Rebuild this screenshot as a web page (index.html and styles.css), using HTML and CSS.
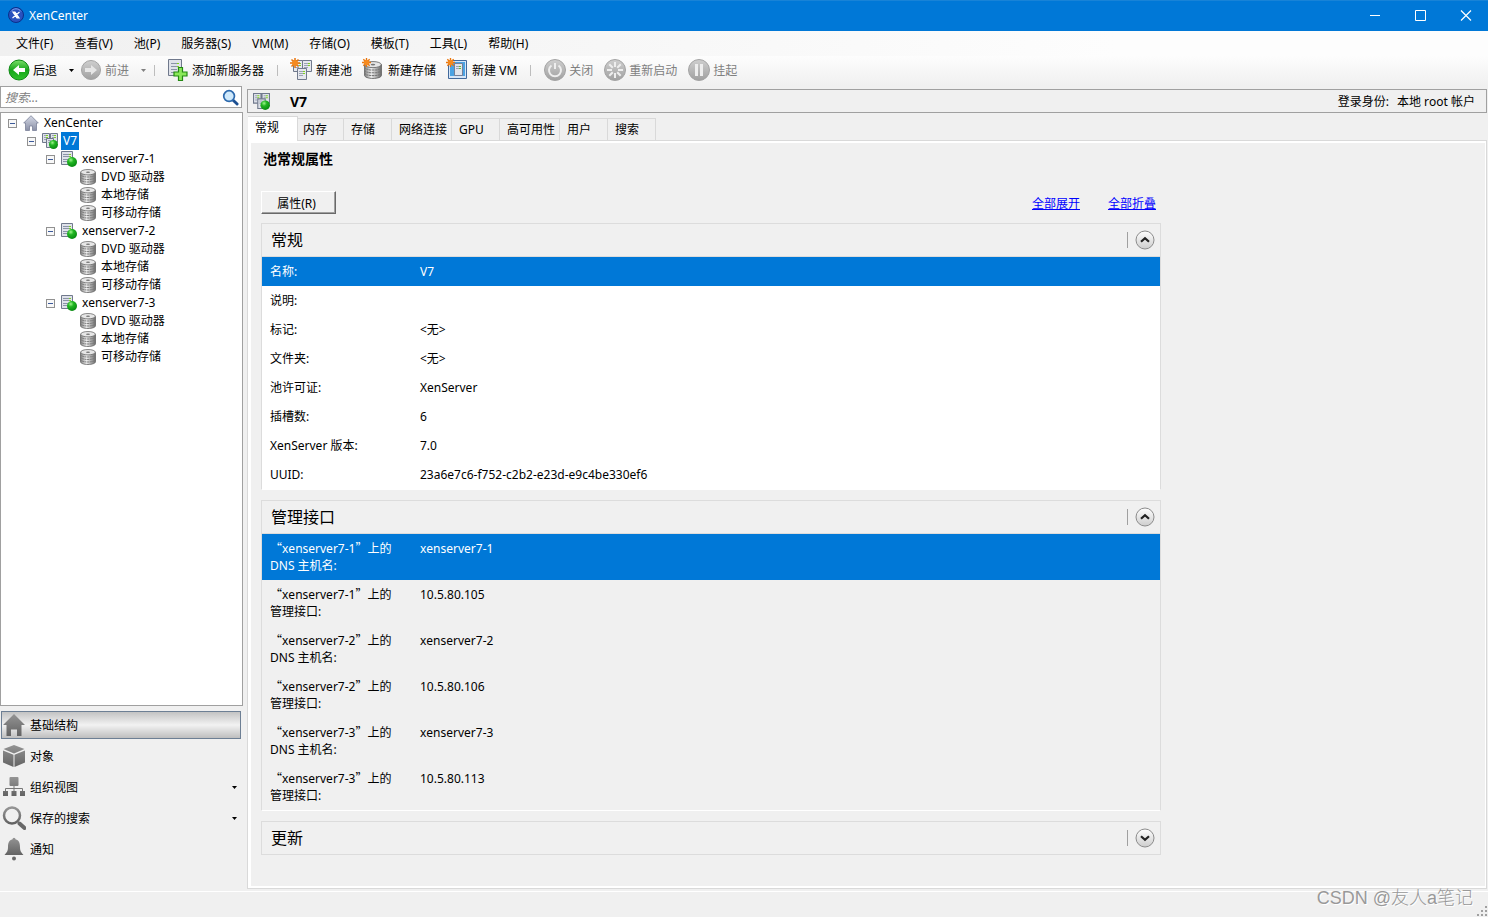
FILE: index.html
```html
<!DOCTYPE html>
<html lang="zh-CN">
<head>
<meta charset="utf-8">
<title>XenCenter</title>
<link rel="stylesheet" href="styles.css">
</head>
<body>
<svg class="sprite" aria-hidden="true">
  <defs>
    <linearGradient id="g-green" x1="0" y1="0" x2="0" y2="1"><stop offset="0" stop-color="#7be06a"/><stop offset=".5" stop-color="#17a51a"/><stop offset="1" stop-color="#2fc42c"/></linearGradient>
    <linearGradient id="g-gray" x1="0" y1="0" x2="0" y2="1"><stop offset="0" stop-color="#cfcfcf"/><stop offset="1" stop-color="#a0a0a0"/></linearGradient>
    <linearGradient id="g-nav" x1="0" y1="0" x2="0" y2="1"><stop offset="0" stop-color="#949494"/><stop offset="1" stop-color="#636363"/></linearGradient>
    <linearGradient id="g-disk" x1="0" y1="0" x2="1" y2="0"><stop offset="0" stop-color="#808080"/><stop offset=".4" stop-color="#efefef"/><stop offset="1" stop-color="#6a6a6a"/></linearGradient>
    <linearGradient id="g-house" x1="0" y1="0" x2="0" y2="1"><stop offset="0" stop-color="#d5d9e6"/><stop offset="1" stop-color="#8a90a6"/></linearGradient>
    <linearGradient id="g-round" x1="0" y1="0" x2="0" y2="1"><stop offset="0" stop-color="#fff"/><stop offset="1" stop-color="#cdcdcd"/></linearGradient>
    <radialGradient id="g-ball" cx=".38" cy=".3" r=".7"><stop offset="0" stop-color="#9cf58a"/><stop offset=".4" stop-color="#21b522"/><stop offset="1" stop-color="#078a10"/></radialGradient>
    <symbol id="i-star" viewBox="0 0 10 10"><path d="M5 0v10M0 5h10M1.500 1.500l7 7M8.500 1.500l-7 7" stroke="#e8740c" stroke-width="1.500"/><circle cx="5" cy="5" r="3" fill="#f58a1f"/></symbol>
    <symbol id="i-rack" viewBox="0 0 10 12"><path d="M.5.5h9v11h-9z" fill="#e6e8ee" stroke="#70798c"/><path d="M2 3.500h4M2 5.500h4M2 7.500h4" stroke="#9aa2b4"/><path d="M6 3.500h2M6 5.500h2" stroke="#7ed321"/></symbol>
    <symbol id="i-pool" viewBox="0 0 16 16"><path d="M.5.5h7v9h-7zM8.500.5h7v9h-7z" fill="#dfe2ea" stroke="#70798c"/><path d="M2 2.500h2M2 4.500h2M10 2.500h2M10 4.500h2M2 6.500h2" stroke="#9aa2b4"/><path d="M4 2.500h2M4 4.500h2M12 2.500h2M12 4.500h2" stroke="#7ed321"/><path d="M4.500 5.500h7v9h-7z" fill="#dfe2ea" stroke="#70798c"/><path d="M6 7.500h3M6 9.500h3" stroke="#9aa2b4"/><circle cx="11.500" cy="11.500" r="4.500" fill="url(#g-ball)"/></symbol>
    <symbol id="i-server" viewBox="0 0 16 16"><path d="M.5.5h11v13h-11z" fill="#dfe2ea" stroke="#70798c"/><path d="M2 3.500h6M2 5.500h6M2 8.500h5M2 10.500h4" stroke="#8a93a8"/><path d="M8 3.500h2M8 5.500h2" stroke="#7ed321"/><circle cx="11" cy="11" r="5" fill="url(#g-ball)"/></symbol>
    <symbol id="i-disk" viewBox="0 0 16 16"><path d="M.5 3.200v9.600c0 1.500 3.400 2.700 7.500 2.700s7.500-1.200 7.500-2.700V3.200z" fill="url(#g-disk)" stroke="#666" stroke-width=".8"/><path d="M.5 5.500c0 1.600 3.400 2.500 7.500 2.500s7.500-.9 7.500-2.500M.5 8C.5 9.600 3.900 10.500 8 10.500s7.500-.9 7.500-2.500M.5 10.500C.5 12.100 3.900 13 8 13s7.500-.9 7.500-2.500" fill="none" stroke="#777" stroke-width=".9" stroke-dasharray="2 .5"/><ellipse cx="8" cy="3.200" rx="7.300" ry="2.700" fill="#e6e6e6" stroke="#6d6d6d" stroke-width=".8"/><ellipse cx="8" cy="3.200" rx="2" ry=".8" fill="#777"/></symbol>
    <symbol id="i-home" viewBox="0 0 16 16"><path d="M8 .7L15.300 8H13.500v7.500h-4v-4.500h-3v4.500h-4V8H.7z" fill="url(#g-house)" stroke="#7b8299" stroke-width=".8"/></symbol>
    <symbol id="i-up" viewBox="0 0 20 20"><circle cx="10" cy="10" r="9" fill="url(#g-round)" stroke="#8c8c8c"/><path d="M6 11.800l4-3.600 4 3.600" fill="none" stroke="#222" stroke-width="2.200"/></symbol>
    <symbol id="i-down" viewBox="0 0 20 20"><circle cx="10" cy="10" r="9" fill="url(#g-round)" stroke="#8c8c8c"/><path d="M6 8.200l4 3.600 4-3.600" fill="none" stroke="#222" stroke-width="2.200"/></symbol>
    <symbol id="i-drop" viewBox="0 0 5 3"><path d="M0 0h5L2.500 3z" fill="currentColor"/></symbol>
  </defs>
</svg>
<div class="app">
  <header class="titlebar">
    <svg class="logo" viewBox="0 0 16 16"><circle cx="8" cy="8" r="7.500" fill="#2a52be" stroke="#0b2f8a"/><path d="M3 4.500A6 6 0 0 1 13 4.500" fill="none" stroke="#7ea2ee"/><path d="M5 5.200h2l4 5.600H9zM11.500 5L4.500 11" fill="#fff" stroke="#fff" stroke-width="1.200"/></svg>
    <span class="app-name">XenCenter</span>
    <button class="win" aria-label="最小化"><svg viewBox="0 0 12 12"><path d="M0 6.500h10" stroke="#fff"/></svg></button>
    <button class="win" aria-label="最大化"><svg viewBox="0 0 12 12"><path d="M.5 1.500h10v10h-10z" fill="none" stroke="#fff"/></svg></button>
    <button class="win" aria-label="关闭窗口"><svg viewBox="0 0 12 12"><path d="M1 1.500l10 10M11 1.500L1 11.500" stroke="#fff" stroke-width="1.200"/></svg></button>
  </header>
  <nav class="menubar">
    <button>文件(F)</button><button>查看(V)</button><button>池(P)</button><button>服务器(S)</button><button>VM(M)</button><button>存储(O)</button><button>模板(T)</button><button>工具(L)</button><button>帮助(H)</button>
  </nav>
  <div class="toolbar">
    <button class="tool"><svg viewBox="0 0 24 24"><circle cx="12" cy="12" r="10" fill="url(#g-green)" stroke="#0e8a14"/><path d="M6 12l6-5v3h6v4h-6v3z" fill="#fff"/></svg>后退</button>
    <button class="drop" aria-label="后退历史"><svg><use href="#i-drop"/></svg></button>
    <button class="tool tool-next" disabled><svg viewBox="0 0 24 24"><circle cx="12" cy="12" r="9.500" fill="url(#g-gray)" stroke="#a4a4a4"/><path d="M18 12l-6-5v3H6v4h6v3z" fill="#e6e6e6"/></svg>前进</button>
    <button class="drop" disabled aria-label="前进历史"><svg><use href="#i-drop"/></svg></button>
    <span class="sep sep-tight"></span>
    <button class="tool"><svg viewBox="0 0 24 24"><path d="M2.500 1.500h13v16h-13z" fill="#dfe2ea" stroke="#70798c"/><path d="M5 5.500h8M5 8.500h8M5 11.500h6M5 14.500h4" stroke="#8a93a8"/><path d="M11 5.500h2M11 8.500h2" stroke="#7ed321"/><path d="M12.500 9.500h4v4.500h4.500v4h-4.500v4.500h-4v-4.500H8v-4h4.500z" fill="#8be85a" stroke="#258a14" stroke-width="1.200"/></svg>添加新服务器</button>
    <span class="sep"></span>
    <button class="tool"><svg viewBox="0 0 24 24"><use href="#i-rack" x="3" y="2" width="10" height="12"/><use href="#i-rack" x="12" y="2" width="10" height="12"/><use href="#i-rack" x="7" y="10" width="10" height="12"/><use href="#i-star" x="0" y="0" width="10" height="10"/></svg>新建池</button>
    <button class="tool"><svg viewBox="0 0 24 24"><use href="#i-disk" x="2" y="3" width="18" height="18"/><use href="#i-star" x="0" y="0" width="9" height="9"/></svg>新建存储</button>
    <button class="tool"><svg viewBox="0 0 24 24"><path d="M2.500 2.500h18v18h-18z" fill="#d6e6f7" stroke="#41699c"/><path d="M4 4h15v14H4z" fill="#4ba3e3"/><path d="M8.500 5.500h8v12h-8z" fill="#e2e5ec" stroke="#75809a"/><path d="M10 8.500h5M10 10.500h5" stroke="#9aa2b4"/><path d="M13 8.500h2M13 10.500h2" stroke="#6cbf2c"/><use href="#i-star" x="0" y="0" width="9" height="9"/></svg>新建 VM</button>
    <span class="sep"></span>
    <button class="tool" disabled><svg viewBox="0 0 24 24"><circle cx="12" cy="12" r="10.500" fill="url(#g-gray)" stroke="#a4a4a4"/><path d="M8.500 7.500a6 6 0 1 0 7 0M12 5v6" fill="none" stroke="#eee" stroke-width="2"/></svg>关闭</button>
    <button class="tool" disabled><svg viewBox="0 0 24 24"><circle cx="12" cy="12" r="10.500" fill="url(#g-gray)" stroke="#a4a4a4"/><path d="M12 4v5M12 15v5M4 12h5M15 12h5M6.300 6.300l3.500 3.500M14.200 14.200l3.500 3.500M6.300 17.700l3.500-3.500M14.200 9.800l3.500-3.500" stroke="#eee" stroke-width="2"/></svg>重新启动</button>
    <button class="tool" disabled><svg viewBox="0 0 24 24"><circle cx="12" cy="12" r="10.500" fill="url(#g-gray)" stroke="#a4a4a4"/><path d="M9.500 6v12M14.500 6v12" stroke="#eee" stroke-width="3"/></svg>挂起</button>
  </div>
  <div class="main">
    <aside class="side">
      <div class="search">
        <input type="text" placeholder="搜索..." aria-label="搜索">
        <svg viewBox="0 0 18 18"><path d="M11 11l5 5" stroke="#1c4f91" stroke-width="3" stroke-linecap="round"/><circle cx="7.500" cy="7.500" r="5.700" fill="#cfe9fb" stroke="#2c69ad" stroke-width="1.800"/></svg>
      </div>
      <div class="tree">
        <ul>
          <li><div class="node"><button class="exp" aria-label="折叠"></button><svg><use href="#i-home"/></svg><span>XenCenter</span></div>
            <ul>
              <li><div class="node"><button class="exp" aria-label="折叠"></button><svg><use href="#i-pool"/></svg><span class="picked">V7</span></div>
                <ul>
                  <li><div class="node"><button class="exp" aria-label="折叠"></button><svg><use href="#i-server"/></svg><span>xenserver7-1</span></div>
                    <ul>
                      <li><div class="node leaf"><svg><use href="#i-disk"/></svg><span>DVD 驱动器</span></div></li>
                      <li><div class="node leaf"><svg><use href="#i-disk"/></svg><span>本地存储</span></div></li>
                      <li><div class="node leaf"><svg><use href="#i-disk"/></svg><span>可移动存储</span></div></li>
                    </ul></li>
                  <li><div class="node"><button class="exp" aria-label="折叠"></button><svg><use href="#i-server"/></svg><span>xenserver7-2</span></div>
                    <ul>
                      <li><div class="node leaf"><svg><use href="#i-disk"/></svg><span>DVD 驱动器</span></div></li>
                      <li><div class="node leaf"><svg><use href="#i-disk"/></svg><span>本地存储</span></div></li>
                      <li><div class="node leaf"><svg><use href="#i-disk"/></svg><span>可移动存储</span></div></li>
                    </ul></li>
                  <li><div class="node"><button class="exp" aria-label="折叠"></button><svg><use href="#i-server"/></svg><span>xenserver7-3</span></div>
                    <ul>
                      <li><div class="node leaf"><svg><use href="#i-disk"/></svg><span>DVD 驱动器</span></div></li>
                      <li><div class="node leaf"><svg><use href="#i-disk"/></svg><span>本地存储</span></div></li>
                      <li><div class="node leaf"><svg><use href="#i-disk"/></svg><span>可移动存储</span></div></li>
                    </ul></li>
                </ul></li>
            </ul></li>
        </ul>
      </div>
      <nav class="views">
        <button class="view current"><svg viewBox="0 0 24 24"><path d="M12 1l11 11h-3.500v11H15v-6.500H9V23H4.500V12H1z" fill="url(#g-nav)"/></svg><span>基础结构</span></button>
        <button class="view"><svg viewBox="0 0 24 24"><path d="M12 1l10.500 4L12 9.500 1.500 5zM1 6.500l10.500 4.300V23L1 18.500zM23 6.500l-10.500 4.300V23L23 18.500z" fill="url(#g-nav)"/></svg><span>对象</span></button>
        <button class="view"><svg viewBox="0 0 24 24"><path d="M8.500 2h7a1 1 0 0 1 1 1v7a1 1 0 0 1-1 1h-7a1 1 0 0 1-1-1V3a1 1 0 0 1 1-1zM1 16h5v5H1zM9.500 16h5v5h-5zM18 16h5v5h-5z" fill="url(#g-nav)"/><path d="M12 11v5M3.500 16v-2.500h17V16" fill="none" stroke="#777"/></svg><span>组织视图</span><svg class="caret"><use href="#i-drop"/></svg></button>
        <button class="view"><svg viewBox="0 0 24 24"><circle cx="10" cy="9.500" r="8" fill="none" stroke="url(#g-nav)" stroke-width="2.500"/><path d="M17.500 17.500l5 4.500" stroke="#686868" stroke-width="4" stroke-linecap="round"/></svg><span>保存的搜索</span><svg class="caret"><use href="#i-drop"/></svg></button>
        <button class="view"><svg viewBox="0 0 24 24"><path d="M10.500 2.200a1.500 1.500 0 0 1 3 0C17 3 18 6 18 10c0 4 1 5 3.500 8h-19C5 15 6 14 6 10c0-4 1-7 4.500-7.800z" fill="url(#g-nav)"/><circle cx="12" cy="21.500" r="2" fill="#686868"/></svg><span>通知</span></button>
      </nav>
    </aside>
    <main class="detail">
      <div class="object-bar"><svg><use href="#i-pool"/></svg><h1>V7</h1><span class="login">登录身份:</span><span>本地 root 帐户</span></div>
      <div class="tabs" role="tablist">
        <button role="tab" class="tab active" aria-selected="true">常规</button><button role="tab" class="tab">内存</button><button role="tab" class="tab">存储</button><button role="tab" class="tab">网络连接</button><button role="tab" class="tab">GPU</button><button role="tab" class="tab">高可用性</button><button role="tab" class="tab">用户</button><button role="tab" class="tab">搜索</button>
      </div>
      <div class="page">
        <div class="content">
          <h2>池常规属性</h2>
          <div class="actions"><button class="props">属性(R)</button><a href="#all">全部展开</a><a href="#none">全部折叠</a></div>
          <section class="card">
            <div class="card-head"><h3>常规</h3><button aria-label="折叠"><svg><use href="#i-up"/></svg></button></div>
            <table class="rows white">
              <tr class="sel"><th>名称:</th><td>V7</td></tr>
              <tr><th>说明:</th><td></td></tr>
              <tr><th>标记:</th><td>&lt;无&gt;</td></tr>
              <tr><th>文件夹:</th><td>&lt;无&gt;</td></tr>
              <tr><th>池许可证:</th><td>XenServer</td></tr>
              <tr><th>插槽数:</th><td>6</td></tr>
              <tr><th>XenServer 版本:</th><td>7.0</td></tr>
              <tr><th>UUID:</th><td>23a6e7c6-f752-c2b2-e23d-e9c4be330ef6</td></tr>
            </table>
          </section>
          <section class="card">
            <div class="card-head"><h3>管理接口</h3><button aria-label="折叠"><svg><use href="#i-up"/></svg></button></div>
            <table class="rows">
              <tr class="sel"><th><span class="q">“</span>xenserver7-1<span class="q">”</span>上的<br>DNS 主机名:</th><td>xenserver7-1</td></tr>
              <tr><th><span class="q">“</span>xenserver7-1<span class="q">”</span>上的<br>管理接口:</th><td>10.5.80.105</td></tr>
              <tr><th><span class="q">“</span>xenserver7-2<span class="q">”</span>上的<br>DNS 主机名:</th><td>xenserver7-2</td></tr>
              <tr><th><span class="q">“</span>xenserver7-2<span class="q">”</span>上的<br>管理接口:</th><td>10.5.80.106</td></tr>
              <tr><th><span class="q">“</span>xenserver7-3<span class="q">”</span>上的<br>DNS 主机名:</th><td>xenserver7-3</td></tr>
              <tr><th><span class="q">“</span>xenserver7-3<span class="q">”</span>上的<br>管理接口:</th><td>10.5.80.113</td></tr>
            </table>
          </section>
          <section class="card">
            <div class="card-head"><h3>更新</h3><button aria-label="展开"><svg><use href="#i-down"/></svg></button></div>
          </section>
        </div>
      </div>
    </main>
  </div>
  <footer class="status"><svg viewBox="0 0 11 11"><path d="M8 0h2v2H8zM4 4h2v2H4zM8 4h2v2H8zM0 8h2v2H0zM4 8h2v2H4zM8 8h2v2H8z" fill="#a0a0a0"/></svg></footer>
  <div class="watermark">CSDN @友人a笔记</div>
</div>
</body>
</html>
```
FILE: styles.css
```css
* { box-sizing: border-box; }
body {
  margin: 0;
  background: #f0f0f0;
  color: #000;
  font: 12px/17px "Noto Sans", "Noto Sans CJK SC", sans-serif;
  font-kerning: none;
}
button, input { font: inherit; color: inherit; font-kerning: none; }
button { margin: 0; padding: 0; border: 0; background: none; white-space: nowrap; }
ul { list-style: none; margin: 0; padding: 0; }
h1, h2, h3 { margin: 0; }
svg { display: block; flex: none; }
.sprite { position: absolute; width: 0; height: 0; }

.app { position: relative; display: flex; flex-direction: column; min-height: 100vh; }

.titlebar { display: flex; align-items: center; height: 31px; padding: 0 0 2px 8px; background: #0078d7; border-top: 1px solid #1883d7; color: #fff; }
.logo { width: 16px; height: 16px; margin-right: 5px; }
.app-name { flex: 1; }
.win { display: grid; place-items: center; width: 45px; height: 28px; }
.win svg { width: 12px; height: 12px; }

.menubar { display: flex; gap: 1px; height: 25px; padding-left: 6px; background: linear-gradient(to right, #f0f0f0, #fdfdfd 75%); }
.menubar button { padding: 0 10px; }

.toolbar { display: flex; align-items: center; height: 30px; padding: 0 0 2px 7px; background: linear-gradient(#fdfdfd, #f0f0f0); }
.tool { display: flex; align-items: center; gap: 2px; }
.tool svg { width: 24px; height: 24px; }
.tool + .tool { margin-left: 10px; }
.tool:disabled { color: #808080; }
.tool-next { margin-left: 4px; }
.drop { width: 8px; margin-left: 10px; }
.drop svg { width: 5px; height: 3px; margin: auto; }
.drop:disabled { color: #808080; }
.sep { width: 1px; height: 11px; margin: 0 12px 0 13px; background: #bdbdbd; }
.sep-tight { margin: 0 11px 0 7px; }

.main { flex: 1; display: grid; grid-template-columns: 243px minmax(0, 1fr); column-gap: 4px; border-bottom: 1px solid #fff; }

.side { display: flex; flex-direction: column; }
.search { display: flex; align-items: center; height: 22px; margin: 0 1px 4px 0; padding: 0 2px 0 4px; border: 1px solid #a0a0a0; background: #fff; }
.search input { flex: 1; min-width: 0; padding: 0; border: 0; outline: 0; background: none; font-style: italic; }
.search input::placeholder { color: #808080; opacity: 1; }
.search svg { width: 17px; height: 17px; }
.tree { flex: 1; padding: 1px 0 0 7px; border: 1px solid #a0a0a0; background: #fff; }
.tree ul ul { padding-left: 19px; }
.node { display: flex; align-items: center; height: 18px; }
.node svg { width: 16px; height: 16px; margin: 0 3px 1px 6px; }
.node span { height: 18px; padding: 0 2px; line-height: 18px; }
.node .picked { background: #0078d7; color: #fff; }
.leaf { padding-left: 9px; }
.exp { width: 9px; height: 9px; border: 1px solid #919191; background: linear-gradient(#3c5a9a, #3c5a9a) center / 5px 1px no-repeat, #f8f8f8; }

.views { display: flex; flex-direction: column; gap: 3px; padding: 5px 2px 28px 1px; }
.view { display: flex; align-items: center; gap: 4px; height: 28px; padding: 0 3px 0 0; border: 1px solid transparent; text-align: left; }
.view svg { width: 24px; height: 24px; }
.view span { flex: 1; }
.view .caret { width: 5px; height: 3px; }
.current { border-color: #6d7f94; background: linear-gradient(#c3c3c3, #f2f2f2 50%, #bebebe); }

.detail { display: flex; flex-direction: column; padding: 3px 1px 2px 0; }
.object-bar { display: flex; align-items: center; height: 24px; padding: 0 11px 0 5px; border: 1px solid #a0a0a0; }
.object-bar svg { width: 17px; height: 17px; }
.object-bar h1 { flex: 1; margin-left: 20px; font-size: 14px; }
.login { margin-right: 8px; }

.tabs { position: relative; display: flex; align-items: flex-end; margin: 3px 0 -1px 1px; }
.tab { min-width: 48px; height: 23px; padding: 0 4px 0 7px; border: 1px solid #d9d9d9; border-left: 0; text-align: left; }
.tab.active { z-index: 1; min-width: 50px; height: 25px; margin-right: -2px; padding-bottom: 3px; background: #fff; border-bottom: 0; }
.page { flex: 1; padding: 8px 10px 30px; border: 1px solid #d9d9d9; box-shadow: inset 3px 2px 0 #fff, inset -1px -2px 0 #fff; }
.content { max-width: 903px; padding: 0 0 0 3px; }
.content h2 { padding-left: 2px; font-size: 14px; line-height: 20px; }
.actions { display: flex; align-items: center; gap: 28px; margin: 22px 5px 9px 0; }
.actions a { padding-top: 1px; color: #00f; }
.props { width: 75px; height: 23px; margin-right: auto; padding: 1px 4px 0 0; border: 1px solid #696969; border-top-color: #fff; border-left-color: #fff; box-shadow: inset -1px -1px 0 #a0a0a0; }

.card { margin-bottom: 10px; border: 1px solid #dcdcdc; border-bottom-color: #fff; }
.card:last-child { margin-bottom: 0; border-bottom: 0; }
.card-head { display: flex; align-items: center; height: 33px; padding: 0 5px 0 9px; border-bottom: 1px solid #dcdcdc; }
.card-head h3 { flex: 1; padding-top: 1px; font-size: 16px; font-weight: 400; }
.card-head button { padding-left: 8px; background: linear-gradient(#a0a0a0, #a0a0a0) left / 1px 16px no-repeat; }
.card-head svg { width: 20px; height: 20px; }
.rows { width: 100%; border-collapse: collapse; }
.rows th, .rows td { padding: 6px 0; height: 29px; vertical-align: top; text-align: left; font-weight: 400; }
.rows th { width: 158px; padding-left: 8px; }
.white { background: #fff; }
.sel { background: #0078d7; color: #fff; }
.q { font-family: "Noto Sans CJK SC", sans-serif; line-height: 1; }

.status { flex: none; display: flex; justify-content: flex-end; align-items: flex-end; height: 25px; }
.status svg { width: 11px; height: 11px; }
.watermark { position: absolute; right: 15px; bottom: 7px; color: #999; font-family: "Liberation Sans", "Noto Sans CJK SC", sans-serif; font-size: 18px; font-weight: 300; line-height: 24px; text-shadow: 1px 1px 0 #fff; }
```
